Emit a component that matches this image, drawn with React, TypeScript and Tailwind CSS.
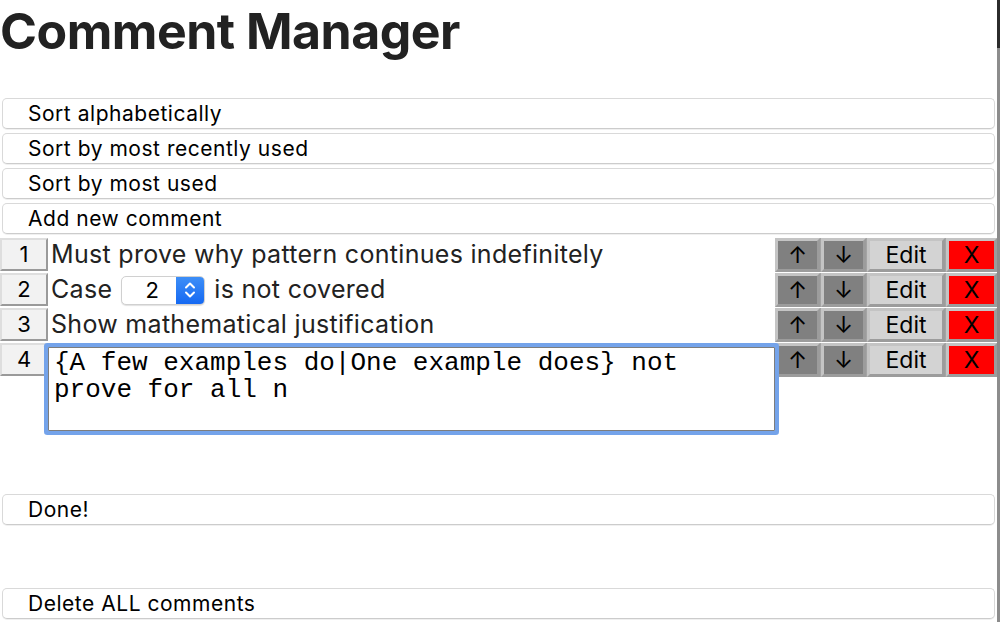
import { useState } from 'react';

// ============= Types =============
type Comment = {
  id: number;
  text: string;
};

// ============= Constants =============
const SORT_ACTIONS = [
  'Sort alphabetically',
  'Sort by most recently used',
  'Sort by most used',
  'Add new comment',
];

const COMMENTS: Comment[] = [
  { id: 1, text: 'Must prove why pattern continues indefinitely' },
  { id: 2, text: 'Case {2|3|4} is not covered' },
  { id: 3, text: 'Show mathematical justification' },
  { id: 4, text: '{A few examples do|One example does} not prove for all n' },
];

// ============= Components =============
const WideButton = ({ label, className = '' }: { label: string; className?: string }) => (
  <button
    className={`mx-[2px] flex h-[31px] items-center rounded-[5px] border border-[#d9d9d9] border-b-[#cccccc] bg-white pl-[25px] text-left text-[21px] tracking-[0.025em] text-black shadow-[0_1px_0_rgba(0,0,0,0.06)] ${className}`}
  >
    {label}
  </button>
);

const BevelButton = ({ label, tone }: { label: string; tone: 'dark' | 'light' | 'red' }) => {
  const bg = tone === 'dark' ? 'bg-[#808080]' : tone === 'light' ? 'bg-[#d3d3d3]' : 'bg-[#ff0000]';
  const width = tone === 'dark' ? 'w-[45px]' : tone === 'light' ? 'w-[78px]' : 'w-[51px]';
  return (
    <button
      className={`flex h-[34px] ${width} items-center justify-center border-[3px] border-t-[#c4c4c4] border-l-[#c4c4c4] border-r-[#9c9c9c] border-b-[#9c9c9c] ${bg} text-[23px] leading-none text-black`}
    >
      {label}
    </button>
  );
};

const NumberBox = ({ n }: { n: number }) => (
  <div className="flex h-[33px] w-[48px] shrink-0 items-center justify-center border-[2px] border-t-[#dedede] border-l-[#dedede] border-r-[#9a9a9a] border-b-[#9a9a9a] bg-[#f2f2f2] text-[22px] text-black">
    {n}
  </div>
);

const CaseSelect = () => (
  <div className="mx-[9px] flex h-[29px] w-[84px] items-center overflow-hidden rounded-[5px] border border-[#d0d0d0] bg-white shadow-[0_1px_1px_rgba(0,0,0,0.12)]">
    <span className="flex-1 pl-[6px] text-center text-[22px] text-black">2</span>
    <span className="flex h-full w-[28px] items-center justify-center bg-gradient-to-b from-[#3d8ef7] to-[#1468f2]">
      <svg width="12" height="20" viewBox="0 0 12 20" fill="none" stroke="white" strokeWidth="2" strokeLinecap="round" strokeLinejoin="round">
        <path d="M2 7.5 6 3.5 10 7.5" />
        <path d="M2 12.5 6 16.5 10 12.5" />
      </svg>
    </span>
  </div>
);

const CommentRow = ({ comment, editing }: { comment: Comment; editing: boolean }) => {
  const [draft, setDraft] = useState(comment.text);

  return (
    <div className="flex items-start">
      <NumberBox n={comment.id} />
      <div className="relative min-w-0 flex-1">
        {editing ? (
          <textarea
            value={draft}
            onChange={(e) => setDraft(e.target.value)}
            className="relative z-10 mt-[4px] block h-[84px] w-full resize-none rounded-[1px] border border-[#7d7d7d] bg-white py-[2px] pl-[5px] pr-[12px] text-[26px] leading-[27px] text-black outline-none ring-[4px] ring-[#74a3ea]"
            style={{ fontFamily: '"Liberation Mono", "Courier New", monospace' }}
          />
        ) : comment.id === 2 ? (
          <div className="flex h-[34px] items-center pl-[3px] text-[25px] tracking-[0.012em] text-[#222]">
            Case
            <CaseSelect />
            is not covered
          </div>
        ) : (
          <div className="flex h-[34px] items-center pl-[3px] text-[25px] tracking-[0.012em] text-[#222]">{comment.text}</div>
        )}
      </div>
      <div className="flex shrink-0 gap-px bg-[#a4a4a4]">
        <BevelButton label="↑" tone="dark" />
        <BevelButton label="↓" tone="dark" />
        <BevelButton label="Edit" tone="light" />
        <BevelButton label="X" tone="red" />
      </div>
    </div>
  );
};

// ============= Main Component =============
export default function App() {
  return (
    <div className="flex min-h-[622px] bg-white" style={{ fontFamily: 'Inter, "Noto Sans", sans-serif' }}>
      <div className="flex min-w-0 flex-1 flex-col">
        <h1 className="text-[50px] font-bold leading-[62px] tracking-[-0.01em] text-[#222]">Comment Manager</h1>

        <div className="mt-[36px] flex flex-col gap-[4px]">
          {SORT_ACTIONS.map((label) => (
            <WideButton key={label} label={label} />
          ))}
        </div>

        <div className="mt-[4px] flex flex-col gap-[1px]">
          {COMMENTS.map((c) => (
            <CommentRow key={c.id} comment={c} editing={c.id === 4} />
          ))}
        </div>

        <WideButton label="Done!" className="mt-[63px]" />
        <WideButton label="Delete ALL comments" className="mt-[63px]" />
      </div>

      {/* Window edge */}
      <div className="flex w-[3px] shrink-0 flex-col">
        <div className="h-[48px] bg-[#2b2b2b]" />
        <div className="flex-1 bg-[#8c8c8c]" />
      </div>
    </div>
  );
}
